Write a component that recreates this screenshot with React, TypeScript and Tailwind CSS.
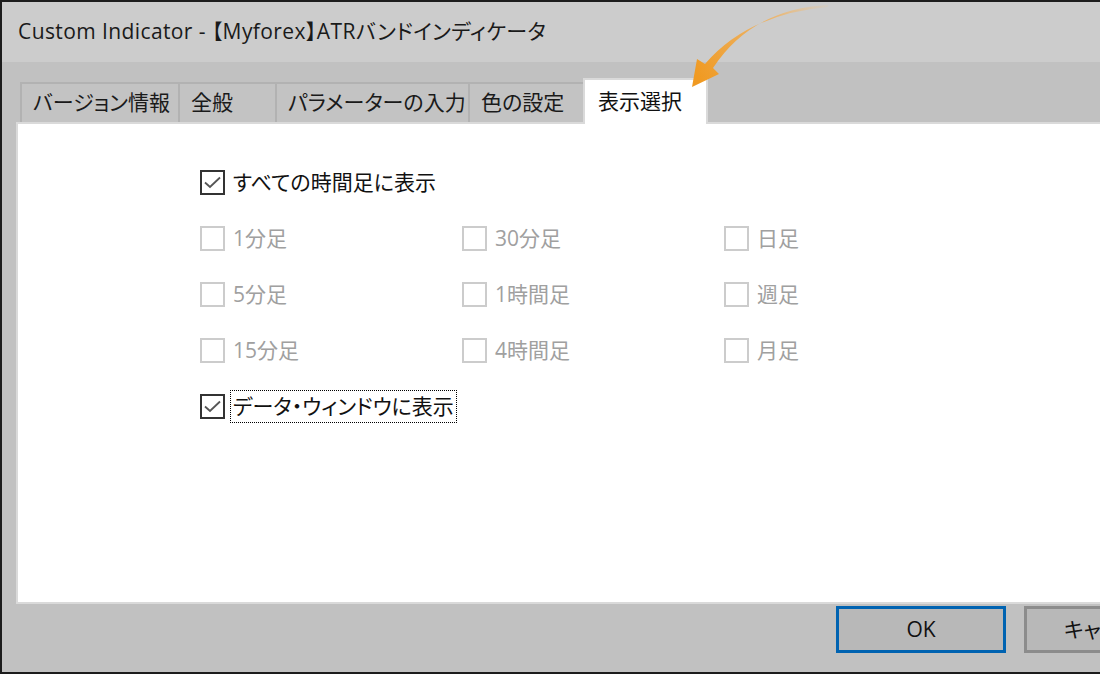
import React from 'react';

const FONT = { fontFamily: '"Open Sans", "Noto Sans CJK JP", sans-serif' };

type Tab = { label: string; width: string; active?: boolean };

const tabs: Tab[] = [
  { label: 'バージョン情報', width: 'w-[158px]' },
  { label: '全般', width: 'w-[97px]' },
  { label: 'パラメーターの入力', width: 'w-[193px]' },
  { label: '色の設定', width: 'w-[115px]' },
  { label: '表示選択', width: 'w-[125px]', active: true },
];

const frames = [
  ['1分足', '30分足', '日足'],
  ['5分足', '1時間足', '週足'],
  ['15分足', '4時間足', '月足'],
];

const Box: React.FC<{ checked?: boolean; disabled?: boolean }> = ({ checked, disabled }) => (
  <span
    className={
      'flex h-[25px] w-[25px] shrink-0 items-center justify-center border-2 bg-white ' +
      (disabled ? 'border-[#cccccc]' : 'border-[#333333]')
    }
  >
    {checked && (
      <svg width="21" height="21" viewBox="0 0 21 21">
        <path d="M3 10.5 L8 15 L18 5.5" fill="none" stroke="#555555" strokeWidth="1.8" />
      </svg>
    )}
  </span>
);

const Check: React.FC<{ label: string; checked?: boolean; disabled?: boolean; focus?: boolean }> = ({
  label,
  checked,
  disabled,
  focus,
}) => (
  <div className="flex h-[56px] items-center">
    <Box checked={checked} disabled={disabled} />
    <span
      className={
        'ml-[5px] whitespace-nowrap px-[2px] leading-[31px] ' +
        (disabled ? 'text-[#a0a0a0] ' : 'text-[#111111] ') +
        (focus ? 'border border-dotted border-black' : 'border border-transparent')
      }
    >
      {label}
    </span>
  </div>
);

export default function App() {
  return (
    <div
      className="relative flex h-[674px] w-[1100px] flex-col overflow-hidden bg-[#1c1c1c] pb-[2px] pl-[2px] pt-[2px] text-[21px] [font-feature-settings:'palt']"
      style={FONT}
    >
      <div className="flex h-[60px] items-center whitespace-nowrap bg-[#cccccc] pl-[16px] tracking-[0.4px] text-[#1a1a1a]">
        Custom Indicator - 【Myforex】ATRバンドインディケータ
      </div>

      <div className="flex flex-1 flex-col bg-[#c1c1c1] pl-[14px] pt-[16px]">
        <div className="flex h-[44px] items-end pl-[4px]">
          {tabs.map((t) =>
            t.active ? (
              <div
                key={t.label}
                className={`${t.width} relative z-10 -mb-[2px] flex h-[46px] shrink-0 items-center whitespace-nowrap border-2 border-b-0 border-[#dadada] bg-white pl-[13px] text-[#111111]`}
              >
                {t.label}
              </div>
            ) : (
              <div
                key={t.label}
                className={`${t.width} flex h-[40px] shrink-0 items-center whitespace-nowrap border-l-2 border-t-2 border-[#b2b2b2] bg-[#c3c3c3] pl-[11px] text-[#1a1a1a]`}
              >
                {t.label}
              </div>
            ),
          )}
        </div>

        <div className="h-[482px] border-2 border-r-0 border-[#dadada] bg-white pl-[182px] pt-[30px]">
          <Check label="すべての時間足に表示" checked />
          <div className="grid w-[786px] grid-cols-3">
            {frames.flat().map((f) => (
              <Check key={f} label={f} disabled />
            ))}
          </div>
          <Check label="データ・ウィンドウに表示" checked focus />
        </div>

        <div className="flex gap-[18px] pl-[820px] pt-[2px]">
          <button className="flex h-[47px] w-[170px] shrink-0 items-center justify-center border-[3px] border-[#0063b1] bg-[#b8b8b8] text-[#111111]">
            OK
          </button>
          <button className="flex h-[47px] w-[170px] shrink-0 items-center justify-start whitespace-nowrap border-[3px] border-[#8c8c8c] bg-[#b8b8b8] pl-[37px] text-[#111111]">
            キャンセル
          </button>
        </div>
      </div>

      <svg className="pointer-events-none absolute left-0 top-0 z-20" width="1100" height="674" viewBox="0 0 1100 674">
        <defs>
          <linearGradient id="arw" x1="828" y1="5" x2="700" y2="80" gradientUnits="userSpaceOnUse">
            <stop offset="0" stopColor="#f7c27a" stopOpacity="0.1" />
            <stop offset="0.35" stopColor="#f3b057" stopOpacity="0.8" />
            <stop offset="1" stopColor="#f09a22" />
          </linearGradient>
        </defs>
        <path
          d="M828 5 Q752 9 713 68 L719 74 L692 87 L697 59 L705 64 Q748 14 828 7 Z"
          fill="url(#arw)"
        />
      </svg>
    </div>
  );
}
